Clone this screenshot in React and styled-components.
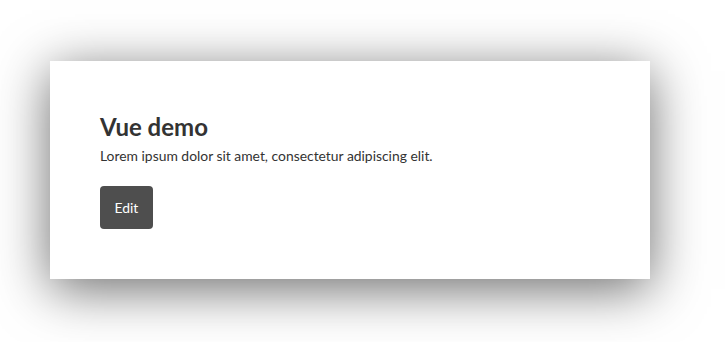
import React from "react";
import styled, { createGlobalStyle } from "styled-components";

const GlobalStyle = createGlobalStyle`
  html, body {
    margin: 0;
    padding: 0;
    background: #fff;
  }
  body {
    font-family: Lato, "Open Sans", sans-serif;
    color: #333;
  }
`;

const Page = styled.div`
  padding: 61px 75px 63px 50px;
`;

const Card = styled.div`
  width: 600px;
  box-sizing: border-box;
  padding: 50px;
  background: #fff;
  box-shadow: 0 10px 50px rgba(0, 0, 0, 0.58);
`;

const Title = styled.h1`
  margin: 0;
  font-size: 24px;
  font-weight: 700;
  line-height: 32px;
  color: #333;
`;

const Text = styled.p`
  margin: 3px 0 20px;
  font-size: 13.88px;
  line-height: 20px;
  color: #333;
`;

const Button = styled.button`
  display: block;
  height: 43px;
  padding: 0 14.5px;
  border: none;
  border-radius: 4px;
  background: #4e4e4e;
  color: #fff;
  font-family: inherit;
  font-size: 13.88px;
`;

export default function App() {
  return (
    <>
      <GlobalStyle />
      <Page>
        <Card>
          <Title>Vue demo</Title>
          <Text>Lorem ipsum dolor sit amet, consectetur adipiscing elit.</Text>
          <Button>Edit</Button>
        </Card>
      </Page>
    </>
  );
}
